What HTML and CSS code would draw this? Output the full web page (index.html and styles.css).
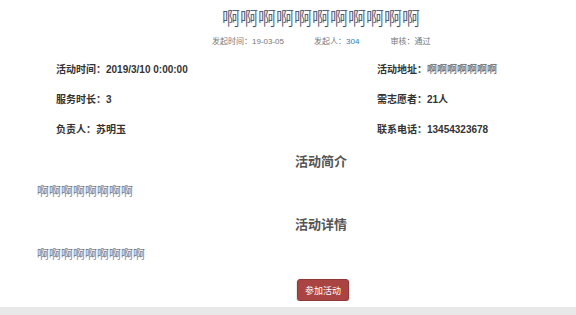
FILE: index.html
```html
<!DOCTYPE html>
<html lang="zh">
<head>
<meta charset="utf-8">
<link rel="stylesheet" href="styles.css">
</head>
<body>
<div class="page">
  <h1 class="title">啊啊啊啊啊啊啊啊啊啊啊</h1>
  <div class="meta">
    <span class="meta-item">发起时间：19-03-05</span>
    <span class="meta-item">发起人：<span class="link">304</span></span>
    <span class="meta-item">审核：通过</span>
  </div>
  <div class="info">
    <div class="info-item">活动时间：2019/3/10 0:00:00</div>
    <div class="info-item">活动地址：<span class="dim">啊啊啊啊啊啊啊</span></div>
    <div class="info-item">服务时长：3</div>
    <div class="info-item">需志愿者：21人</div>
    <div class="info-item">负责人：苏明玉</div>
    <div class="info-item">联系电话：13454323678</div>
  </div>
  <h2 class="section-title">活动简介</h2>
  <p class="body-text">啊啊啊啊啊啊啊啊</p>
  <h2 class="section-title">活动详情</h2>
  <p class="body-text">啊啊啊啊啊啊啊啊啊</p>
  <div class="actions"><button class="btn">参加活动</button></div>
</div>
<div class="footer"></div>
</body>
</html>
```
FILE: styles.css
```css
html, body { margin: 0; padding: 0; background: #fff; }
body { font-family: "Liberation Sans", "Noto Sans CJK SC", sans-serif; color: #333; }
.page { padding-top: 8px; }
.title {
  margin: 0 0 0 66px; text-align: center; font-size: 18px; font-weight: 300;
  line-height: 22px; color: #3e4a5e; text-shadow: 0 0 1px rgba(110,140,190,0.55);
}
.meta {
  margin: 4px 0 0 0; display: flex; font-size: 8px; line-height: 16px; color: #777;
}
.meta-item:nth-child(1) { margin-left: 212px; }
.meta-item:nth-child(2) { margin-left: 30px; }
.meta-item:nth-child(3) { margin-left: 31px; }
.link { color: #337ab7; }
.info {
  display: grid; grid-template-columns: 321px 1fr; padding-left: 56px; margin-top: 13px;
  row-gap: 16px; font-size: 10px; font-weight: bold; line-height: 14px; color: #333;
}
.dim { color: #666; font-weight: normal; text-shadow: 0 0 1px rgba(110,110,130,0.6); }
.section-title {
  margin: 16px 0 0 66px; text-align: center; font-size: 13px; font-weight: bold;
  line-height: 18px; color: #555;
}
.body-text {
  margin: 13px 0 0 37px; font-size: 12px; line-height: 16px; color: #5a5a66;
  font-weight: 300; text-shadow: 0 0 1px rgba(110,130,180,0.55);
}
.actions { margin: 16px 0 0 70px; display: flex; justify-content: center; }
.btn {
  font-family: inherit; font-size: 9px; color: #fff; background: #a94442;
  border: 1px solid #8f3a38; border-radius: 3px; padding: 0 7px; height: 22px;
  box-shadow: 0 1px 2px rgba(0,0,0,0.3);
}
.footer { position: absolute; left: 0; right: 0; top: 307px; height: 8px; background: #e8e8e8; }
```
